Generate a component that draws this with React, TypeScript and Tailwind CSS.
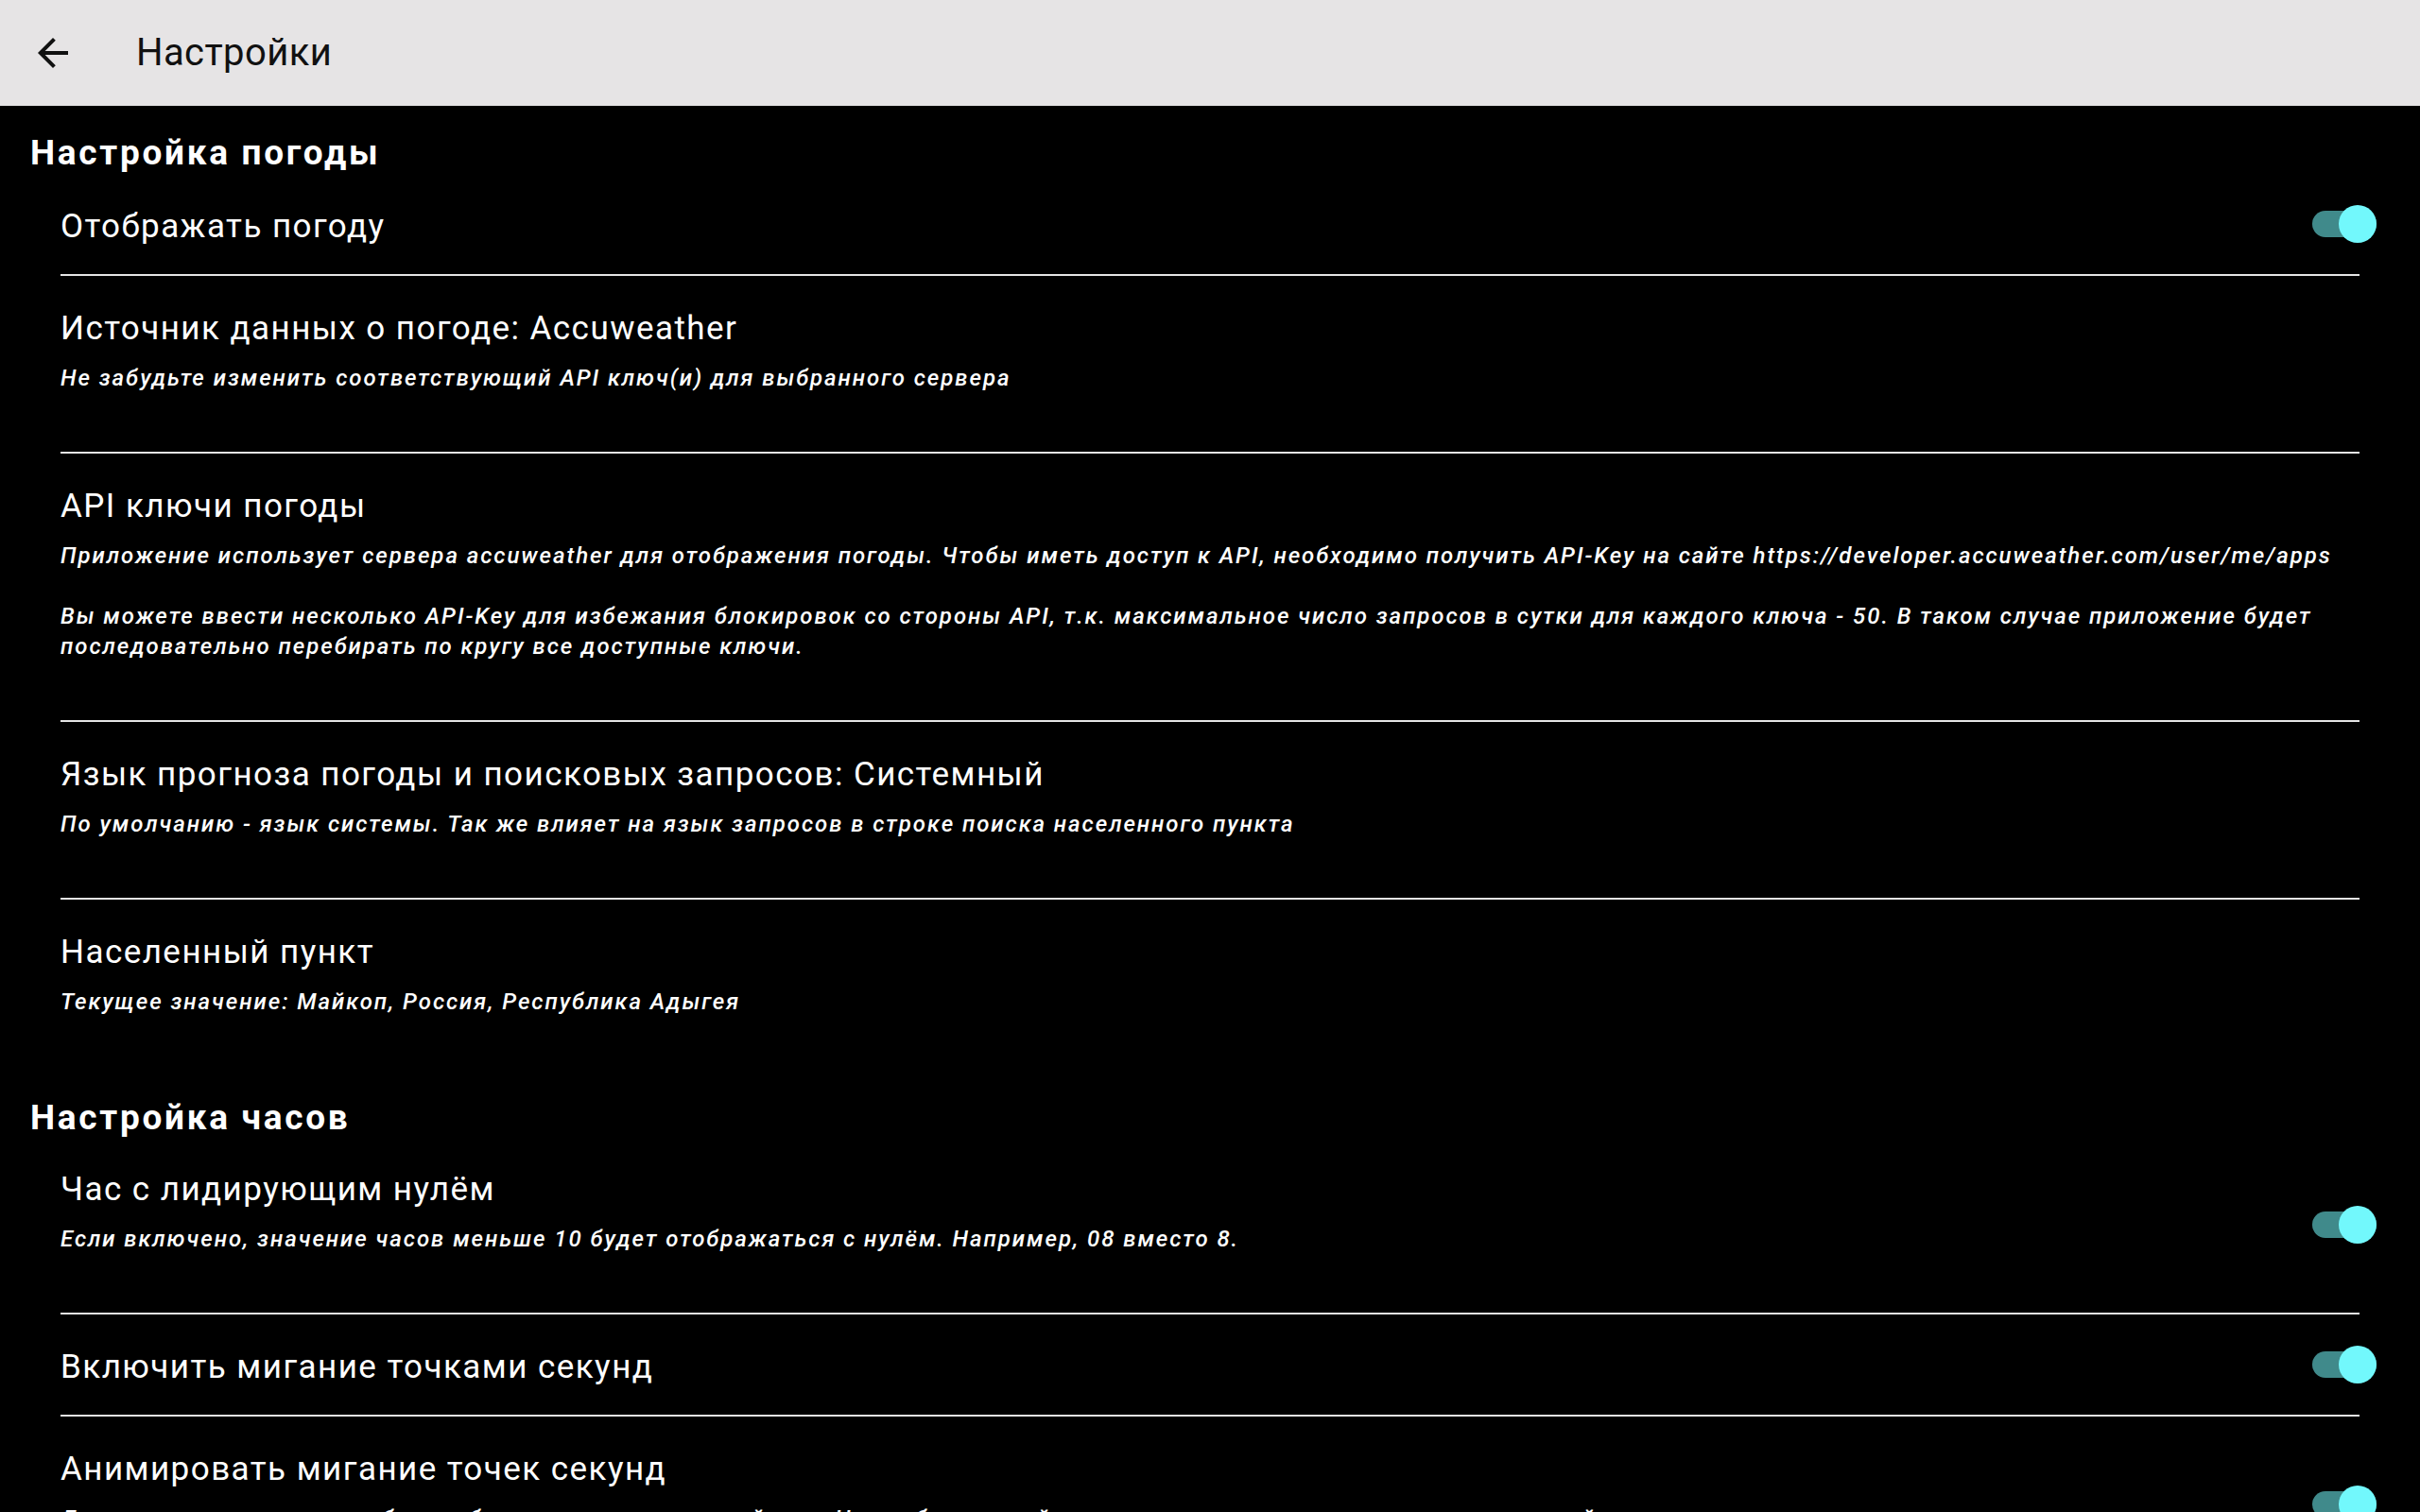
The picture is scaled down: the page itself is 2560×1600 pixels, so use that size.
import React from "react";

const font = { fontFamily: "Roboto, 'Noto Sans', sans-serif" };

function Toggle() {
  return (
    <div className="relative w-[68px] h-[40px] shrink-0">
      <div className="absolute left-0 top-[6px] w-[68px] h-[28px] rounded-full bg-[#408a8b]" />
      <div className="absolute right-0 top-0 w-[40px] h-[40px] rounded-full bg-[#72f8fc]" />
    </div>
  );
}

function Divider() {
  return <div className="ml-[64px] mr-[64px] h-[2px] bg-[#e4e4e4]" />;
}

type ItemProps = {
  title: string;
  summary?: React.ReactNode;
  toggle?: boolean;
};

function Item({ title, summary, toggle }: ItemProps) {
  return (
    <div className="flex items-center pl-[64px] pr-[46px]">
      <div
        className={
          "flex-1 min-w-0 pt-[34px] " +
          (toggle ? "pr-[40px] " : "") +
          (summary ? "pb-[62px]" : "pb-[28px]")
        }
      >
        <div className="text-[35px] leading-[44px] text-white tracking-[1.45px] whitespace-nowrap">{title}</div>
        {summary && (
          <div className="mt-[14px] text-[24px] leading-[32px] text-white italic font-medium tracking-[1.95px]">
            {summary}
          </div>
        )}
      </div>
      {toggle && <Toggle />}
    </div>
  );
}

export default function App() {
  return (
    <div className="w-[2560px] h-[1600px] overflow-hidden bg-black" style={font}>
      <div className="h-[112px] bg-[#e6e4e5] flex items-center">
        <div className="ml-[32px] w-[48px] h-[48px]">
          <svg viewBox="0 0 24 24" width="48" height="48">
            <path
              d="M20 11H7.83l5.59-5.59L12 4l-8 8 8 8 1.41-1.41L7.83 13H20v-2z"
              fill="#111"
            />
          </svg>
        </div>
        <div className="ml-[64px] text-[40px] leading-[48px] text-[#111] tracking-[0.4px]">Настройки</div>
      </div>

      <div className="pl-[32px] pt-[30px] pb-[2px] text-[37px] leading-[40px] font-bold text-white tracking-[2.7px]">
        Настройка погоды
      </div>
      <Item title="Отображать погоду" toggle />
      <Divider />
      <Item
        title="Источник данных о погоде: Accuweather"
        summary="Не забудьте изменить соответствующий API ключ(и) для выбранного сервера"
      />
      <Divider />
      <Item
        title="API ключи погоды"
        summary={
          <>
            <div>
              Приложение использует сервера accuweather для отображения погоды. Чтобы иметь доступ к API, необходимо получить API-Key на сайте https://developer.accuweather.com/user/me/apps
            </div>
            <div className="h-[32px]" />
            <div>
              Вы можете ввести несколько API-Key для избежания блокировок со стороны API, т.к. максимальное число запросов в сутки для каждого ключа - 50. В таком случае приложение будет последовательно перебирать по кругу все доступные ключи.
            </div>
          </>
        }
      />
      <Divider />
      <Item
        title="Язык прогноза погоды и поисковых запросов: Системный"
        summary="По умолчанию - язык системы. Так же влияет на язык запросов в строке поиска населенного пункта"
      />
      <Divider />
      <Item title="Населенный пункт" summary="Текущее значение: Майкоп, Россия, Республика Адыгея" />

      <div className="pl-[32px] pt-[25px] pb-[0px] text-[37px] leading-[40px] font-bold text-white tracking-[2.7px]">
        Настройка часов
      </div>
      <Item
        title="Час с лидирующим нулём"
        summary="Если включено, значение часов меньше 10 будет отображаться с нулём. Например, 08 вместо 8."
        toggle
      />
      <Divider />
      <Item title="Включить мигание точками секунд" toggle />
      <Divider />
      <Item
        title="Анимировать мигание точек секунд"
        summary="Для плавного мигания требуется больше ресурсов устройства. На слабых устройствах рекомендуется отключить эту настройку."
        toggle
      />
    </div>
  );
}
